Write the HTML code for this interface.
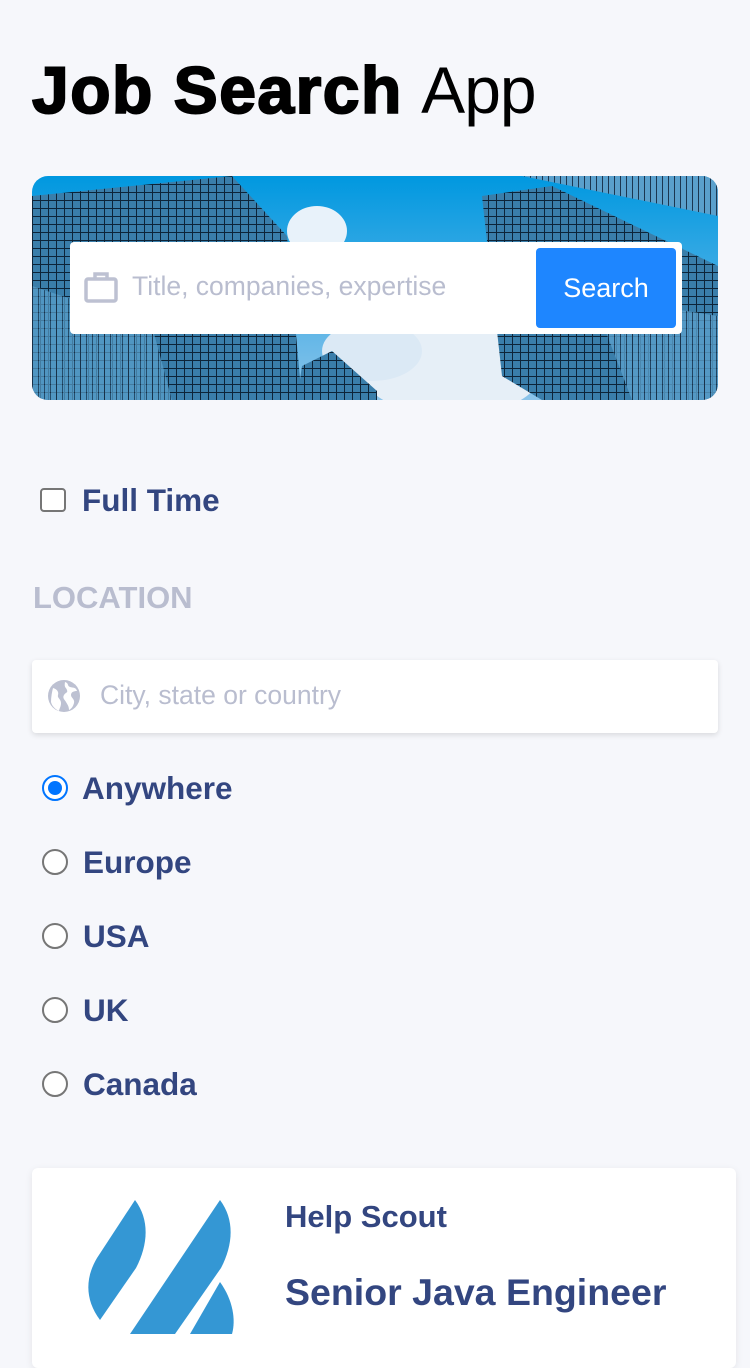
<!DOCTYPE html>
<html><head><meta charset="utf-8"><style>
*{margin:0;padding:0;box-sizing:border-box}
body{width:750px;height:1334px;overflow:hidden;background:#f6f7fb;font-family:"Liberation Sans",Arial,sans-serif;position:relative}
.abs{position:absolute}
h1{position:absolute;left:32px;top:52px;font-size:66px;line-height:76px;color:#000;white-space:nowrap}
h1 b{font-weight:900;letter-spacing:1.5px;-webkit-text-stroke:2px #000}
h1 span{font-weight:300;letter-spacing:-1px}
.hero{left:32px;top:176px;width:686px;height:224px;border-radius:16px;overflow:hidden}
.sbox{left:70px;top:242px;width:612px;height:92px;background:#fff;border-radius:4px}
.btn{left:536px;top:248px;width:140px;height:80px;background:#1e86ff;border-radius:4px;color:#fff;font-size:27px;line-height:80px;text-align:center}
.ph{color:#b9bdcf;font-size:26.5px}
.lbl{color:#334680;font-weight:bold;font-size:31.5px}
.radio{width:26px;height:26px;border:2px solid #767676;border-radius:50%;background:#fff}
</style></head><body>
<h1><b>Job Search</b> <span>App</span></h1>
<div class="abs hero">
<svg width="686" height="224" viewBox="0 0 686 224">
<defs>
<linearGradient id="sky" x1="0" y1="0" x2="0" y2="1"><stop offset="0" stop-color="#0098e0"/><stop offset="1" stop-color="#8cc4ea"/></linearGradient>
<pattern id="g1" width="8" height="8" patternUnits="userSpaceOnUse"><rect width="8" height="8" fill="#3a7eaa"/><path d="M0 0H8M0 0V8" stroke="#0d2438" stroke-width="2"/></pattern>
<pattern id="g2" width="6" height="10" patternUnits="userSpaceOnUse"><rect width="6" height="10" fill="#5aa0cc"/><path d="M0 0V10" stroke="#1b3650" stroke-width="2"/></pattern>
</defs>
<rect width="686" height="224" fill="url(#sky)"/>
<ellipse cx="285" cy="55" rx="30" ry="25" fill="#e8f2fa"/>
<ellipse cx="420" cy="195" rx="90" ry="45" fill="#e6eff7"/>
<ellipse cx="340" cy="175" rx="50" ry="30" fill="#dbe9f5"/>
<polygon points="0,20 200,0 255,60 270,224 0,224" fill="url(#g1)"/>
<polygon points="0,110 120,150 140,224 0,224" fill="url(#g2)" opacity="0.7"/>
<polygon points="270,190 300,175 345,215 345,224 265,224" fill="url(#g1)"/>
<polygon points="450,20 520,10 686,90 686,224 510,224 470,200" fill="url(#g1)"/>
<polygon points="490,0 686,0 686,40" fill="url(#g2)"/>
<polygon points="560,120 686,140 686,224 600,224" fill="url(#g2)" opacity="0.8"/>
</svg></div>
<div class="abs sbox"></div>
<svg class="abs" style="left:84px;top:270px" width="34" height="34" viewBox="0 0 34 34"><rect x="2" y="9" width="30" height="22" rx="2" fill="none" stroke="#bdc1d2" stroke-width="3.5"/><path d="M11 9V4h12v5" fill="none" stroke="#bdc1d2" stroke-width="3.5"/></svg>
<div class="abs ph" style="left:132px;top:271px">Title, companies, expertise</div>
<div class="abs btn">Search</div>
<div class="abs" style="left:40px;top:488px;width:26px;height:24px;border:2px solid #767676;border-radius:4px;background:#fff"></div>
<div class="abs lbl" style="left:82px;top:482px">Full Time</div>
<div class="abs" style="left:33px;top:580px;color:#b9bdcf;font-weight:bold;font-size:31px">LOCATION</div>
<div class="abs" style="left:32px;top:660px;width:686px;height:73px;background:#fff;border-radius:4px;box-shadow:0 2px 6px rgba(0,0,0,0.12)"></div>
<svg class="abs" style="left:47px;top:679px" width="34" height="34" viewBox="0 0 34 34"><circle cx="17" cy="17" r="16" fill="#bdc1d2"/><path d="M6 9c4 1 6 4 5 7s3 4 3 8-2 6-2 8c-4-2-7-5-8-9 0-5 1-10 2-14zM18 3c4 1 2 4 5 5s6 0 7 4c-3 0-6 1-6 4s4 4 3 8-3 6-5 7c0-4-2-6-3-8s-4-4-2-7 4-2 3-5-3-2-2-8z" fill="#fff"/></svg>
<div class="abs ph" style="left:100px;top:680px;font-size:26.5px">City, state or country</div>
<div class="abs" style="left:42px;top:775px;width:26px;height:26px;border:2px solid #0075ff;border-radius:50%;background:#fff"><div style="margin:4px;width:14px;height:14px;border-radius:50%;background:#0075ff"></div></div>
<div class="abs lbl" style="left:82px;top:770px">Anywhere</div>
<div class="abs radio" style="left:42px;top:849px"></div><div class="abs lbl" style="left:83px;top:844px">Europe</div>
<div class="abs radio" style="left:42px;top:923px"></div><div class="abs lbl" style="left:83px;top:918px">USA</div>
<div class="abs radio" style="left:42px;top:997px"></div><div class="abs lbl" style="left:83px;top:992px">UK</div>
<div class="abs radio" style="left:42px;top:1071px"></div><div class="abs lbl" style="left:83px;top:1066px">Canada</div>
<div class="abs" style="left:32px;top:1168px;width:704px;height:200px;background:#fff;border-radius:6px;box-shadow:0 2px 8px rgba(0,0,0,0.08)"></div>
<svg class="abs" style="left:80px;top:1200px" width="160" height="134" viewBox="0 0 160 134"><path d="M55 0C70 20 68 45 56 68L20 120C5 100 5 78 17 58Z" fill="#3497d4"/><path d="M140 0C155 20 153 45 141 68L95 134H50Z" fill="#3497d4"/><path d="M140 82C153 100 156 120 152 134H110Z" fill="#3497d4"/></svg>
<div class="abs lbl" style="left:285px;top:1199px;font-size:31px">Help Scout</div>
<div class="abs lbl" style="left:285px;top:1271px;font-size:37.5px">Senior Java Engineer</div>
</body></html>
